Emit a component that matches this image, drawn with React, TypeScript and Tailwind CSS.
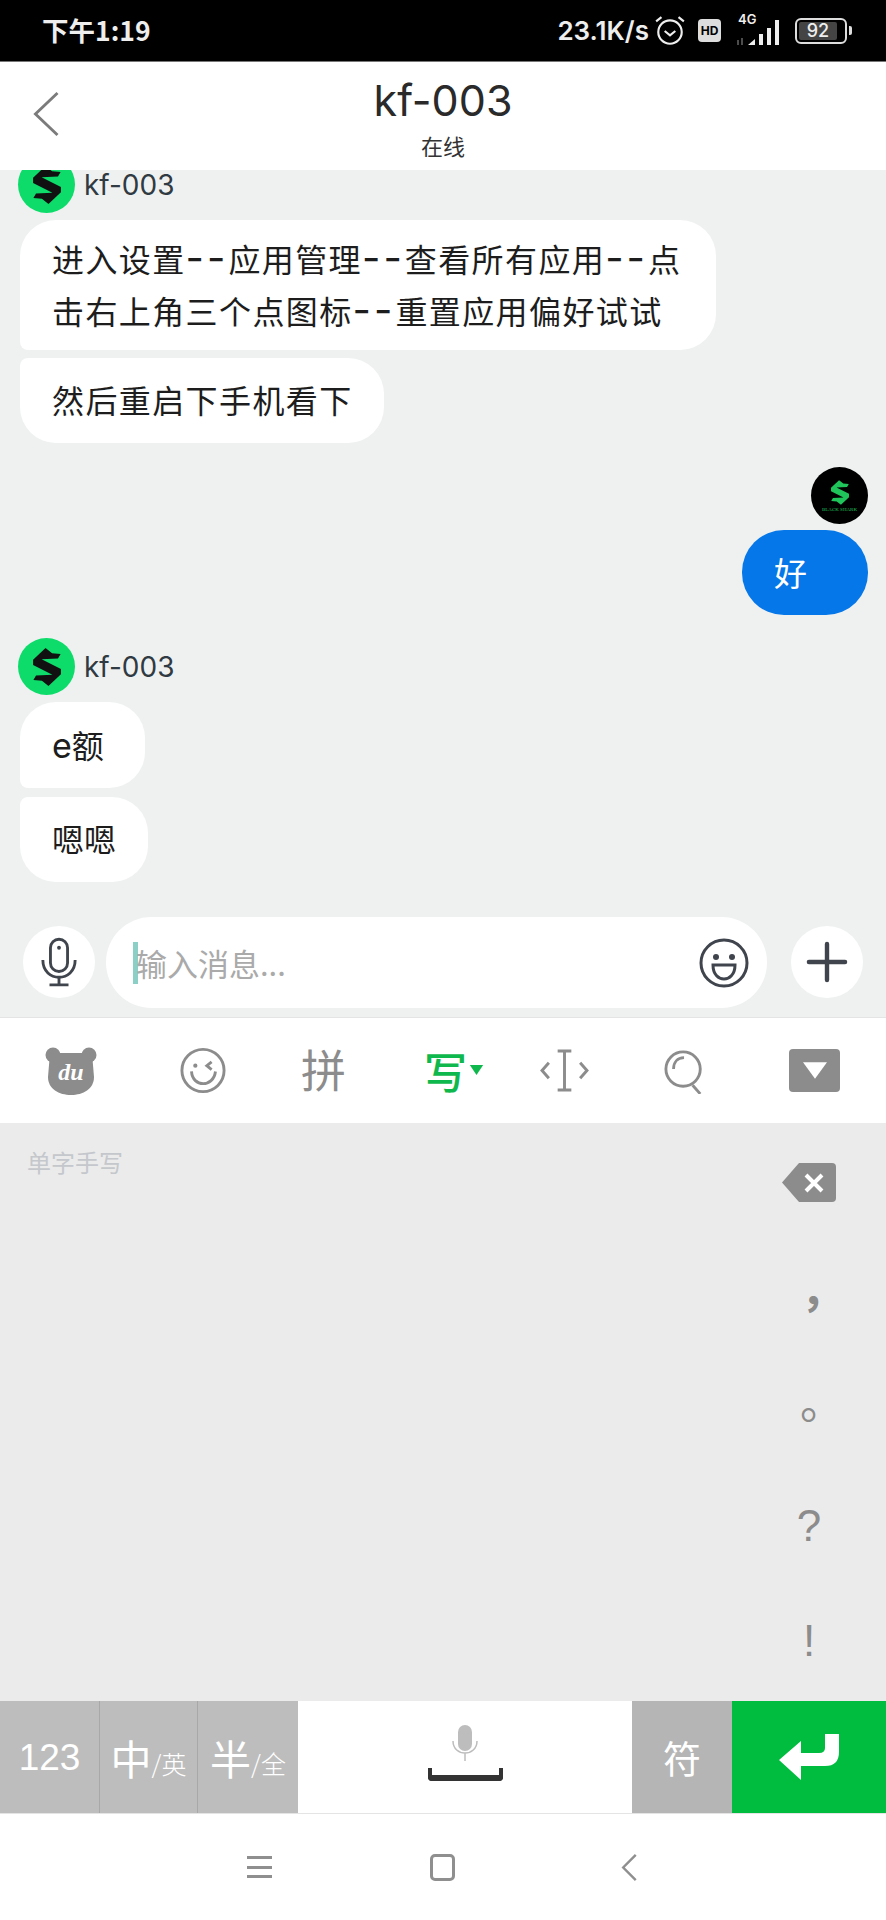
import { Plus } from "lucide-react";

const cjk = "font-['Noto_Sans_CJK_SC',sans-serif]";

const SharkMark = ({ color, className }: { color: string; className: string }) => (
  <svg viewBox="0 0 85 116" className={className}>
    <polygon
      points="38,0 58,16 84,18 76,32 26,34 85,64 85,80 47,116 27,100 1,98 9,84 59,82 0,52 0,36"
      fill={color}
    />
  </svg>
);

const Sender = ({ className = "" }: { className?: string }) => (
  <div className={`flex items-center gap-[9px] ml-[18px] ${className}`}>
    <div className="w-[57px] h-[57px] rounded-full bg-[#0ddc6a] flex items-center justify-center shrink-0">
      <SharkMark color="#111" className="w-[28px] h-[38px]" />
    </div>
    <span className="text-[28px] leading-none text-[#2f3a42] font-['Inter',sans-serif] mt-[1px]">kf-003</span>
  </div>
);

const Bubble = ({ children, className = "" }: { children: React.ReactNode; className?: string }) => (
  <div className={`bg-white rounded-[36px] pl-[32px] text-[32px] text-[#1d1d1d] leading-[52px] whitespace-nowrap ${cjk} ${className}`}>
    {children}
  </div>
);

const Dashes = () => <span className="font-['Inter',sans-serif] text-[40px] tracking-[3px]">--</span>;

const Toolbar = () => (
  <div className="h-[105px] bg-white flex items-center text-[#8c8c8c] shrink-0">
    <svg viewBox="0 0 52 48" className="w-[52px] h-[48px] ml-[45px] shrink-0">
      <circle cx="8" cy="8" r="7.5" fill="#8c8c8c" />
      <circle cx="44" cy="8" r="7.5" fill="#8c8c8c" />
      <path d="M5 6 H47 L49 30 C49 42 38 48 26 48 C14 48 3 42 3 30 Z" fill="#8c8c8c" />
      <text x="26" y="33" textAnchor="middle" fill="#fff" fontSize="24" fontStyle="italic" fontWeight="bold" fontFamily="Liberation Serif">du</text>
    </svg>
    <svg viewBox="0 0 48 48" fill="none" stroke="#8c8c8c" strokeWidth="3" className="w-[46px] h-[47px] ml-[83px] shrink-0">
      <circle cx="24" cy="24" r="22" />
      <circle cx="16" cy="19" r="2.2" fill="#8c8c8c" stroke="none" />
      <path d="M33 15 L28 19 L33 23" />
      <path d="M12 25 C13 42 35 42 37 25" strokeWidth="3" />
    </svg>
    <span className={`text-[45px] leading-none ml-[75px] w-[45px] -mt-[4px] shrink-0 ${cjk}`}>拼</span>
    <div className="flex items-center gap-[2px] text-[#0fb84d] ml-[78px] w-[61px] shrink-0">
      <span className={`text-[43px] leading-none font-medium ${cjk}`}>写</span>
      <svg viewBox="0 0 16 12" className="w-[15px] h-[10px] -mt-[2px]"><path d="M0 0 H16 L8 12 Z" fill="#0fb84d" /></svg>
    </div>
    <svg viewBox="0 0 50 44" fill="none" stroke="#8c8c8c" strokeWidth="3" className="w-[49px] h-[43px] ml-[55px] shrink-0">
      <path d="M9 14 L2 22 L9 30" />
      <path d="M41 14 L48 22 L41 30" />
      <path d="M18 2 H32 M25 2 V42 M18 42 H32" />
    </svg>
    <svg viewBox="0 0 44 48" fill="none" stroke="#8c8c8c" strokeWidth="3" className="w-[42px] h-[46px] ml-[75px] shrink-0">
      <circle cx="20" cy="22" r="18" />
      <path d="M10 22 C10 15 14 10 21 10" />
      <path d="M30 39 L38 48" />
    </svg>
    <div className="w-[51px] h-[43px] ml-[83px] bg-[#8c8c8c] rounded-[4px] flex items-center justify-center shrink-0">
      <svg viewBox="0 0 26 18" className="w-[24px] h-[17px]"><path d="M0 0 H26 L13 18 Z" fill="#fff" /></svg>
    </div>
  </div>
);

const App = () => {
  return (
    <div className={`w-[886px] h-[1920px] flex flex-col overflow-hidden bg-[#eff1f1] ${cjk}`}>
      <div className="h-[61px] bg-black text-[#eee] flex items-center justify-between pl-[42px] pr-[34px] shrink-0">
        <span className="text-[26.5px] font-bold leading-none">下午1:19</span>
        <div className="flex items-center">
          <span className="text-[26px] font-semibold leading-none font-['Inter',sans-serif]">23.1K/s</span>
          <svg viewBox="0 0 30 30" fill="none" stroke="#eee" strokeWidth="2" className="w-[32px] h-[32px] ml-[5px]">
            <circle cx="15" cy="16" r="11" />
            <path d="M10 15 L15 19 L20 15" />
            <path d="M2 6 L7 2 M28 6 L23 2" />
          </svg>
          <div className="w-[23px] h-[23px] ml-[12px] bg-[#ddd] rounded-[4px] text-black text-[12px] font-bold leading-[23px] text-center font-['Inter',sans-serif]">HD</div>
          <div className="relative w-[48px] h-[30px] ml-[14px]">
            <span className="absolute left-[3px] top-[-3px] text-[13px] font-semibold leading-none font-['Inter',sans-serif]">4G</span>
            <svg viewBox="0 0 46 30" className="w-[48px] h-[30px]">
              <path d="M2 29 V24 M6 22 V29" stroke="#666" strokeWidth="1.5" />
              <path d="M12 29 L19 23 V29 Z" fill="#eee" />
              <path d="M25 29 V18 M33 29 V12 M41 29 V4" stroke="#eee" strokeWidth="4" />
            </svg>
          </div>
          <div className="w-[52px] h-[26px] ml-[12px] border-[2.5px] border-[#ddd] rounded-[6px] p-[2px]">
            <div className="w-[38px] h-full bg-[#444] rounded-[2px] text-[18px] font-medium text-[#eee] leading-[17px] text-center font-['Inter',sans-serif]">92</div>
          </div>
          <div className="w-[3px] h-[9px] bg-[#ddd] rounded-r-[2px] ml-[2px]" />
        </div>
      </div>

      <div className="h-[109px] bg-white flex flex-col items-center border-t border-[#777] relative shrink-0">
        <svg viewBox="0 0 28 48" fill="none" stroke="#7b7b7b" strokeWidth="3" className="absolute left-[32px] top-[29px] w-[28px] h-[46px]">
          <path d="M26 2 L3 24 L26 46" />
        </svg>
        <span className="text-[43px] leading-none mt-[17px] text-[#2a2a2a] font-['Inter',sans-serif]">kf-003</span>
        <span className="text-[22px] leading-none mt-[12px] text-[#333]">在线</span>
      </div>

      <div className="flex-1 min-h-0 overflow-hidden flex flex-col">
        <Sender className="-mt-[14px]" />
        <Bubble className="ml-[20px] mt-[7px] w-[696px] h-[130px] py-[12px] tracking-[1.4px] rounded-bl-[8px]">
          进入设置<Dashes />应用管理<Dashes />查看所有应用<Dashes />点<br />
          击右上角三个点图标<Dashes />重置应用偏好试试
        </Bubble>
        <Bubble className="ml-[20px] mt-[8px] self-start h-[85px] w-[364px] py-[15px] tracking-[1.4px] rounded-tl-[8px]">然后重启下手机看下</Bubble>

        <div className="w-[57px] h-[57px] rounded-full bg-black self-end mr-[18px] mt-[24px] flex flex-col items-center justify-center">
          <SharkMark color="#1fc45a" className="w-[18px] h-[25px]" />
          <span className="text-[5px] leading-none mt-[2px] text-[#1fc45a] font-['Liberation_Serif',serif]">BLACK SHARK</span>
        </div>
        <div className="bg-[#0577e8] rounded-[42px] self-end mr-[18px] mt-[6px] w-[126px] h-[85px] pl-[32px] text-[33px] text-white leading-[85px]">好</div>

        <Sender className="mt-[23px]" />
        <Bubble className="ml-[20px] mt-[7px] self-start h-[86px] py-[16px] w-[125px] rounded-bl-[8px]">
          <span className="font-['Inter',sans-serif] text-[34px]">e</span>额
        </Bubble>
        <Bubble className="ml-[20px] mt-[9px] self-start h-[85px] py-[15px] w-[128px] rounded-tl-[8px]">嗯嗯</Bubble>

        <div className="mt-auto h-[101px] flex items-start pl-[23px] pr-[23px] border-b border-[#e4e4e4] shrink-0">
          <div className="w-[72px] h-[72px] mt-[9px] rounded-full bg-white flex items-center justify-center shrink-0">
            <svg viewBox="0 0 40 52" fill="none" stroke="#3f444d" strokeWidth="3" className="w-[38px] h-[50px]">
              <rect x="11" y="2" width="18" height="34" rx="9" />
              <circle cx="20" cy="11" r="2" fill="#3f444d" stroke="none" />
              <path d="M3 24 C3 48 37 48 37 24" />
              <path d="M20 42 V50 M10 50 H30" />
            </svg>
          </div>
          <div className="w-[661px] ml-[11px] h-[91px] bg-white rounded-[46px] flex items-center pl-[27px] pr-[18px] shrink-0">
            <div className="w-[5px] h-[42px] bg-[#8ccfc6] shrink-0" />
            <span className="text-[31px] leading-none text-[#aaa] -ml-[2px]">输入消息...</span>
            <svg viewBox="0 0 50 50" fill="none" stroke="#3f444d" strokeWidth="3" className="w-[50px] h-[50px] ml-auto">
              <circle cx="25" cy="25" r="23" />
              <circle cx="17" cy="19" r="3" fill="#3f444d" stroke="none" />
              <circle cx="33" cy="19" r="3" fill="#3f444d" stroke="none" />
              <path d="M14 27 H36 C36 37 30 41 25 41 C20 41 14 37 14 27 Z" />
            </svg>
          </div>
          <div className="w-[72px] h-[72px] mt-[9px] ml-[24px] rounded-full bg-white flex items-center justify-center shrink-0">
            <Plus className="w-[62px] h-[62px] text-[#3f444d]" strokeWidth={1.7} />
          </div>
        </div>
      </div>

      <Toolbar />

      <div className="h-[578px] bg-[#ebebeb] flex justify-between shrink-0">
        <span className="ml-[27px] mt-[27px] text-[24px] leading-none text-[#c4c7cc]">单字手写</span>
        <div className="w-[88px] mr-[33px] pt-[2px] flex flex-col items-center text-[#8c8c8c] font-['Liberation_Sans',sans-serif]">
          <div className="h-[114px] flex items-center">
            <svg viewBox="0 0 54 39" className="w-[54px] h-[39px]">
              <path d="M17 0 H50 Q54 0 54 4 V35 Q54 39 50 39 H17 L0 19.5 Z" fill="#8c8c8c" />
              <path d="M24 12 L40 28 M40 12 L24 28" stroke="#fff" strokeWidth="4" />
            </svg>
          </div>
          <div className={`h-[114px] flex items-center text-[44px] leading-none font-bold ${cjk}`}>
            <span className="translate-x-[14px] -translate-y-[8px]">，</span>
          </div>
          <div className={`h-[114px] flex items-center text-[44px] leading-none ${cjk}`}>
            <span className="translate-x-[13px] -translate-y-[10px]">。</span>
          </div>
          <div className="h-[114px] flex items-center text-[44px] leading-none pt-[4px]">?</div>
          <div className="h-[114px] flex items-center text-[44px] leading-none pt-[6px]">!</div>
        </div>
      </div>

      <div className="h-[113px] flex text-white border-b border-[#e4e4e4] shrink-0">
        <div className="w-[100px] bg-[#bdbdbd] border-r border-[#a8a8a8] flex items-center justify-center text-[37px] leading-none font-['Liberation_Sans',sans-serif]">123</div>
        <div className="w-[98px] bg-[#bdbdbd] border-r border-[#a8a8a8] flex items-center justify-center">
          <span className="text-[41px] leading-none">中</span><span className="text-[25px] leading-none mt-[12px] font-light">/英</span>
        </div>
        <div className="w-[100px] bg-[#bdbdbd] flex items-center justify-center">
          <span className="text-[41px] leading-none">半</span><span className="text-[25px] leading-none mt-[12px] font-light">/全</span>
        </div>
        <div className="w-[334px] bg-white flex flex-col items-center pt-[24px]">
          <svg viewBox="0 0 28 36" className="w-[28px] h-[36px]">
            <rect x="7" y="0" width="14" height="26" rx="7" fill="#bdbdbd" />
            <path d="M2 16 C2 32 26 32 26 16 M14 28 V36" fill="none" stroke="#bdbdbd" strokeWidth="1.5" />
          </svg>
          <div className="w-[75px] h-[13px] mt-[7px] border-x-[4px] border-b-[6px] border-[#333] rounded-b-[4px]" />
        </div>
        <div className="w-[100px] bg-[#b5b5b5] flex items-center justify-center text-[38px] leading-none">符</div>
        <div className="flex-1 bg-[#00bc3f] flex items-center justify-center">
          <svg viewBox="0 0 60 46" className="w-[60px] h-[46px]"><path d="M22 7 L0 26 L22 46 V32 H46 Q60 32 60 18 V0 H46 V14 Q46 19 40 19 H22 Z" fill="#fff" /></svg>
        </div>
      </div>

      <div className="h-[106px] bg-white flex items-center pl-[247px] shrink-0">
        <div className="w-[25px] h-[22px] flex flex-col justify-between">
          <div className="h-[3px] bg-[#8f8f8f]" /><div className="h-[3px] bg-[#8f8f8f]" /><div className="h-[3px] bg-[#8f8f8f]" />
        </div>
        <div className="w-[25px] h-[27px] ml-[158px] border-[3px] border-[#8f8f8f] rounded-[5px]" />
        <svg viewBox="0 0 16 28" fill="none" stroke="#8f8f8f" strokeWidth="2.5" className="w-[16px] h-[27px] ml-[166px]">
          <path d="M15 1 L2 14 L15 27" />
        </svg>
      </div>
    </div>
  );
};

export default App;
